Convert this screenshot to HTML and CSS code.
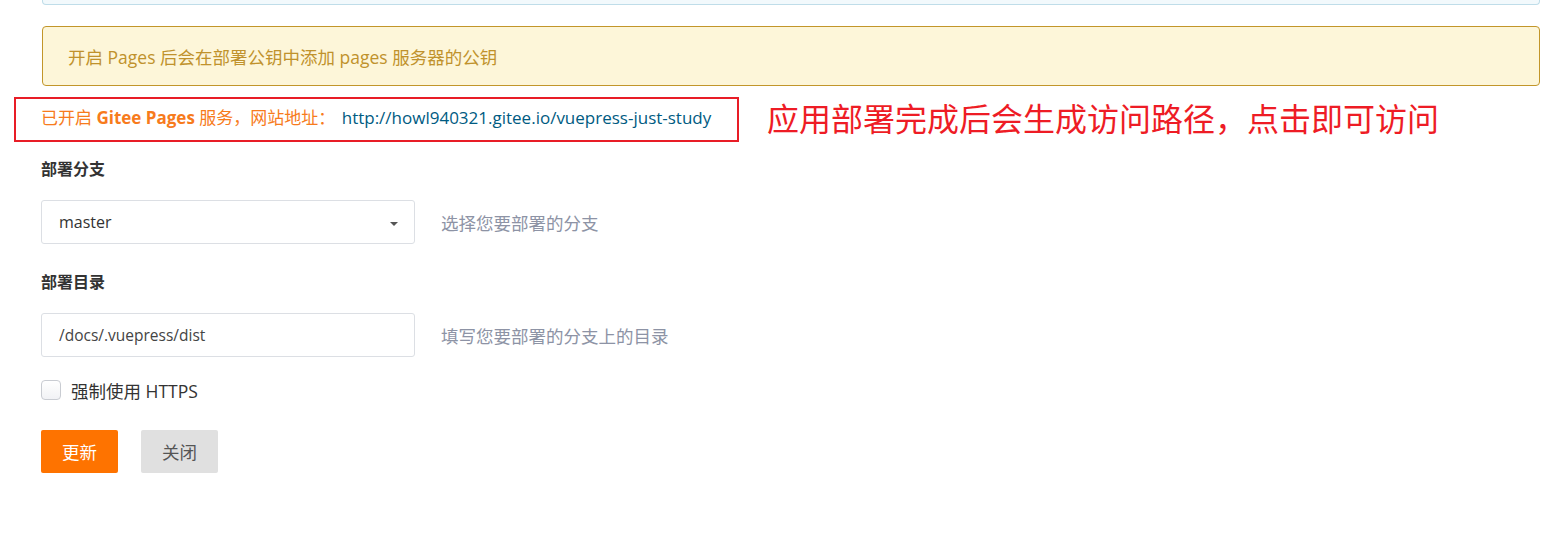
FILE: index.html
```html
<!DOCTYPE html>
<html lang="zh-CN">
<head>
<meta charset="utf-8">
<link rel="stylesheet" href="styles.css">
</head>
<body>
<div class="page">
  <div class="info-tail"></div>
  <div class="notice">开启 Pages 后会在部署公钥中添加 pages 服务器的公钥</div>
  <div class="status-row">
    <div class="status">已开启 <b>Gitee Pages</b> 服务，网站地址： <a class="link" href="#">http://howl940321.gitee.io/vuepress-just-study</a></div>
    <div class="mark-box"></div>
    <div class="mark-text">应用部署完成后会生成访问路径，点击即可访问</div>
  </div>
  <div class="field">
    <div class="label">部署分支</div>
    <div class="control-row">
      <div class="select">
        <span>master</span>
        <span class="caret"></span>
      </div>
      <div class="help">选择您要部署的分支</div>
    </div>
  </div>
  <div class="field">
    <div class="label">部署目录</div>
    <div class="control-row">
      <div class="input">/docs/.vuepress/dist</div>
      <div class="help">填写您要部署的分支上的目录</div>
    </div>
  </div>
  <label class="check">
    <span class="box"></span>
    <span>强制使用 HTTPS</span>
  </label>
  <div class="actions">
    <button class="btn primary">更新</button>
    <button class="btn">关闭</button>
  </div>
</div>
</body>
</html>
```

FILE: styles.css
```css
* { box-sizing: border-box; }
html, body { margin: 0; padding: 0; background: #fff; }
body {
  font-family: "Open Sans", "Noto Sans CJK SC", sans-serif;
  font-size: 16px;
  color: #333;
}
.page {
  position: relative;
  padding-left: 41px;
  padding-right: 12px;
}
.info-tail {
  margin-left: 1px;
  height: 5px;
  border: 1px solid #bfdde9;
  border-top: none;
  border-radius: 0 0 4px 4px;
  background: #f2f9fc;
}
.notice {
  margin-top: 21px;
  margin-left: 1px;
  height: 60px;
  display: flex;
  align-items: center;
  padding-left: 25px;
  background: #fdf6d9;
  border: 1px solid #c2962a;
  border-radius: 4px;
  color: #c0922c;
  font-size: 17.5px;
}
.status-row {
  position: relative;
  height: 62px;
  display: flex;
  align-items: center;
  padding-bottom: 1px;
}
.status {
  color: #f77b1c;
  font-size: 17px;
}
.status b { font-weight: 700; }
.link { color: #005b82; text-decoration: none; margin-left: 2px; }
.mark-box {
  position: absolute;
  left: -27px;
  top: 11px;
  width: 725px;
  height: 45px;
  border: 2px solid #e81d26;
}
.mark-text {
  position: absolute;
  left: 726px;
  top: 13px;
  color: #ee1c25;
  font-size: 32px;
  line-height: 40px;
  white-space: nowrap;
}
.field { margin-top: 5px; }
.field + .field { margin-top: 0; }
.label {
  height: 30px;
  display: flex;
  align-items: center;
  font-weight: 700;
  font-size: 16px;
  color: #333;
}
.control-row {
  margin-top: 17px;
  display: flex;
  align-items: center;
  gap: 26px;
  margin-bottom: 22px;
}
.select, .input {
  width: 374px;
  height: 44px;
  border: 1px solid #dcdfe4;
  border-radius: 3px;
  display: flex;
  align-items: center;
  padding-left: 17px;
  padding-right: 16px;
  background: #fff;
}
.select { justify-content: space-between; color: #333; }
.input { font-size: 15.5px; color: #444; }
.caret {
  width: 0; height: 0;
  border-left: 4px solid transparent;
  border-right: 4px solid transparent;
  border-top: 4px solid #555;
  margin-top: 3px;
}
.help { color: #8d93a5; font-size: 17.5px; }
.check {
  display: flex;
  align-items: center;
  gap: 10px;
  height: 22px;
  margin-top: 3px;
  color: #333;
  font-size: 17.5px;
}
.check .box {
  width: 20px; height: 20px;
  border: 1px solid #c9ccd2;
  border-radius: 4px;
  background: linear-gradient(#fff, #f1f2f5);
}
.actions {
  margin-top: 29px;
  display: flex;
  gap: 23px;
}
.btn {
  width: 77px;
  height: 43px;
  border: none;
  border-radius: 2px;
  background: #e0e0e0;
  color: #555;
  font-family: "Open Sans", "Noto Sans CJK SC", sans-serif;
  font-size: 17.5px;
  padding: 0;
}
.btn.primary { background: #fe7300; color: #fff; }
```
